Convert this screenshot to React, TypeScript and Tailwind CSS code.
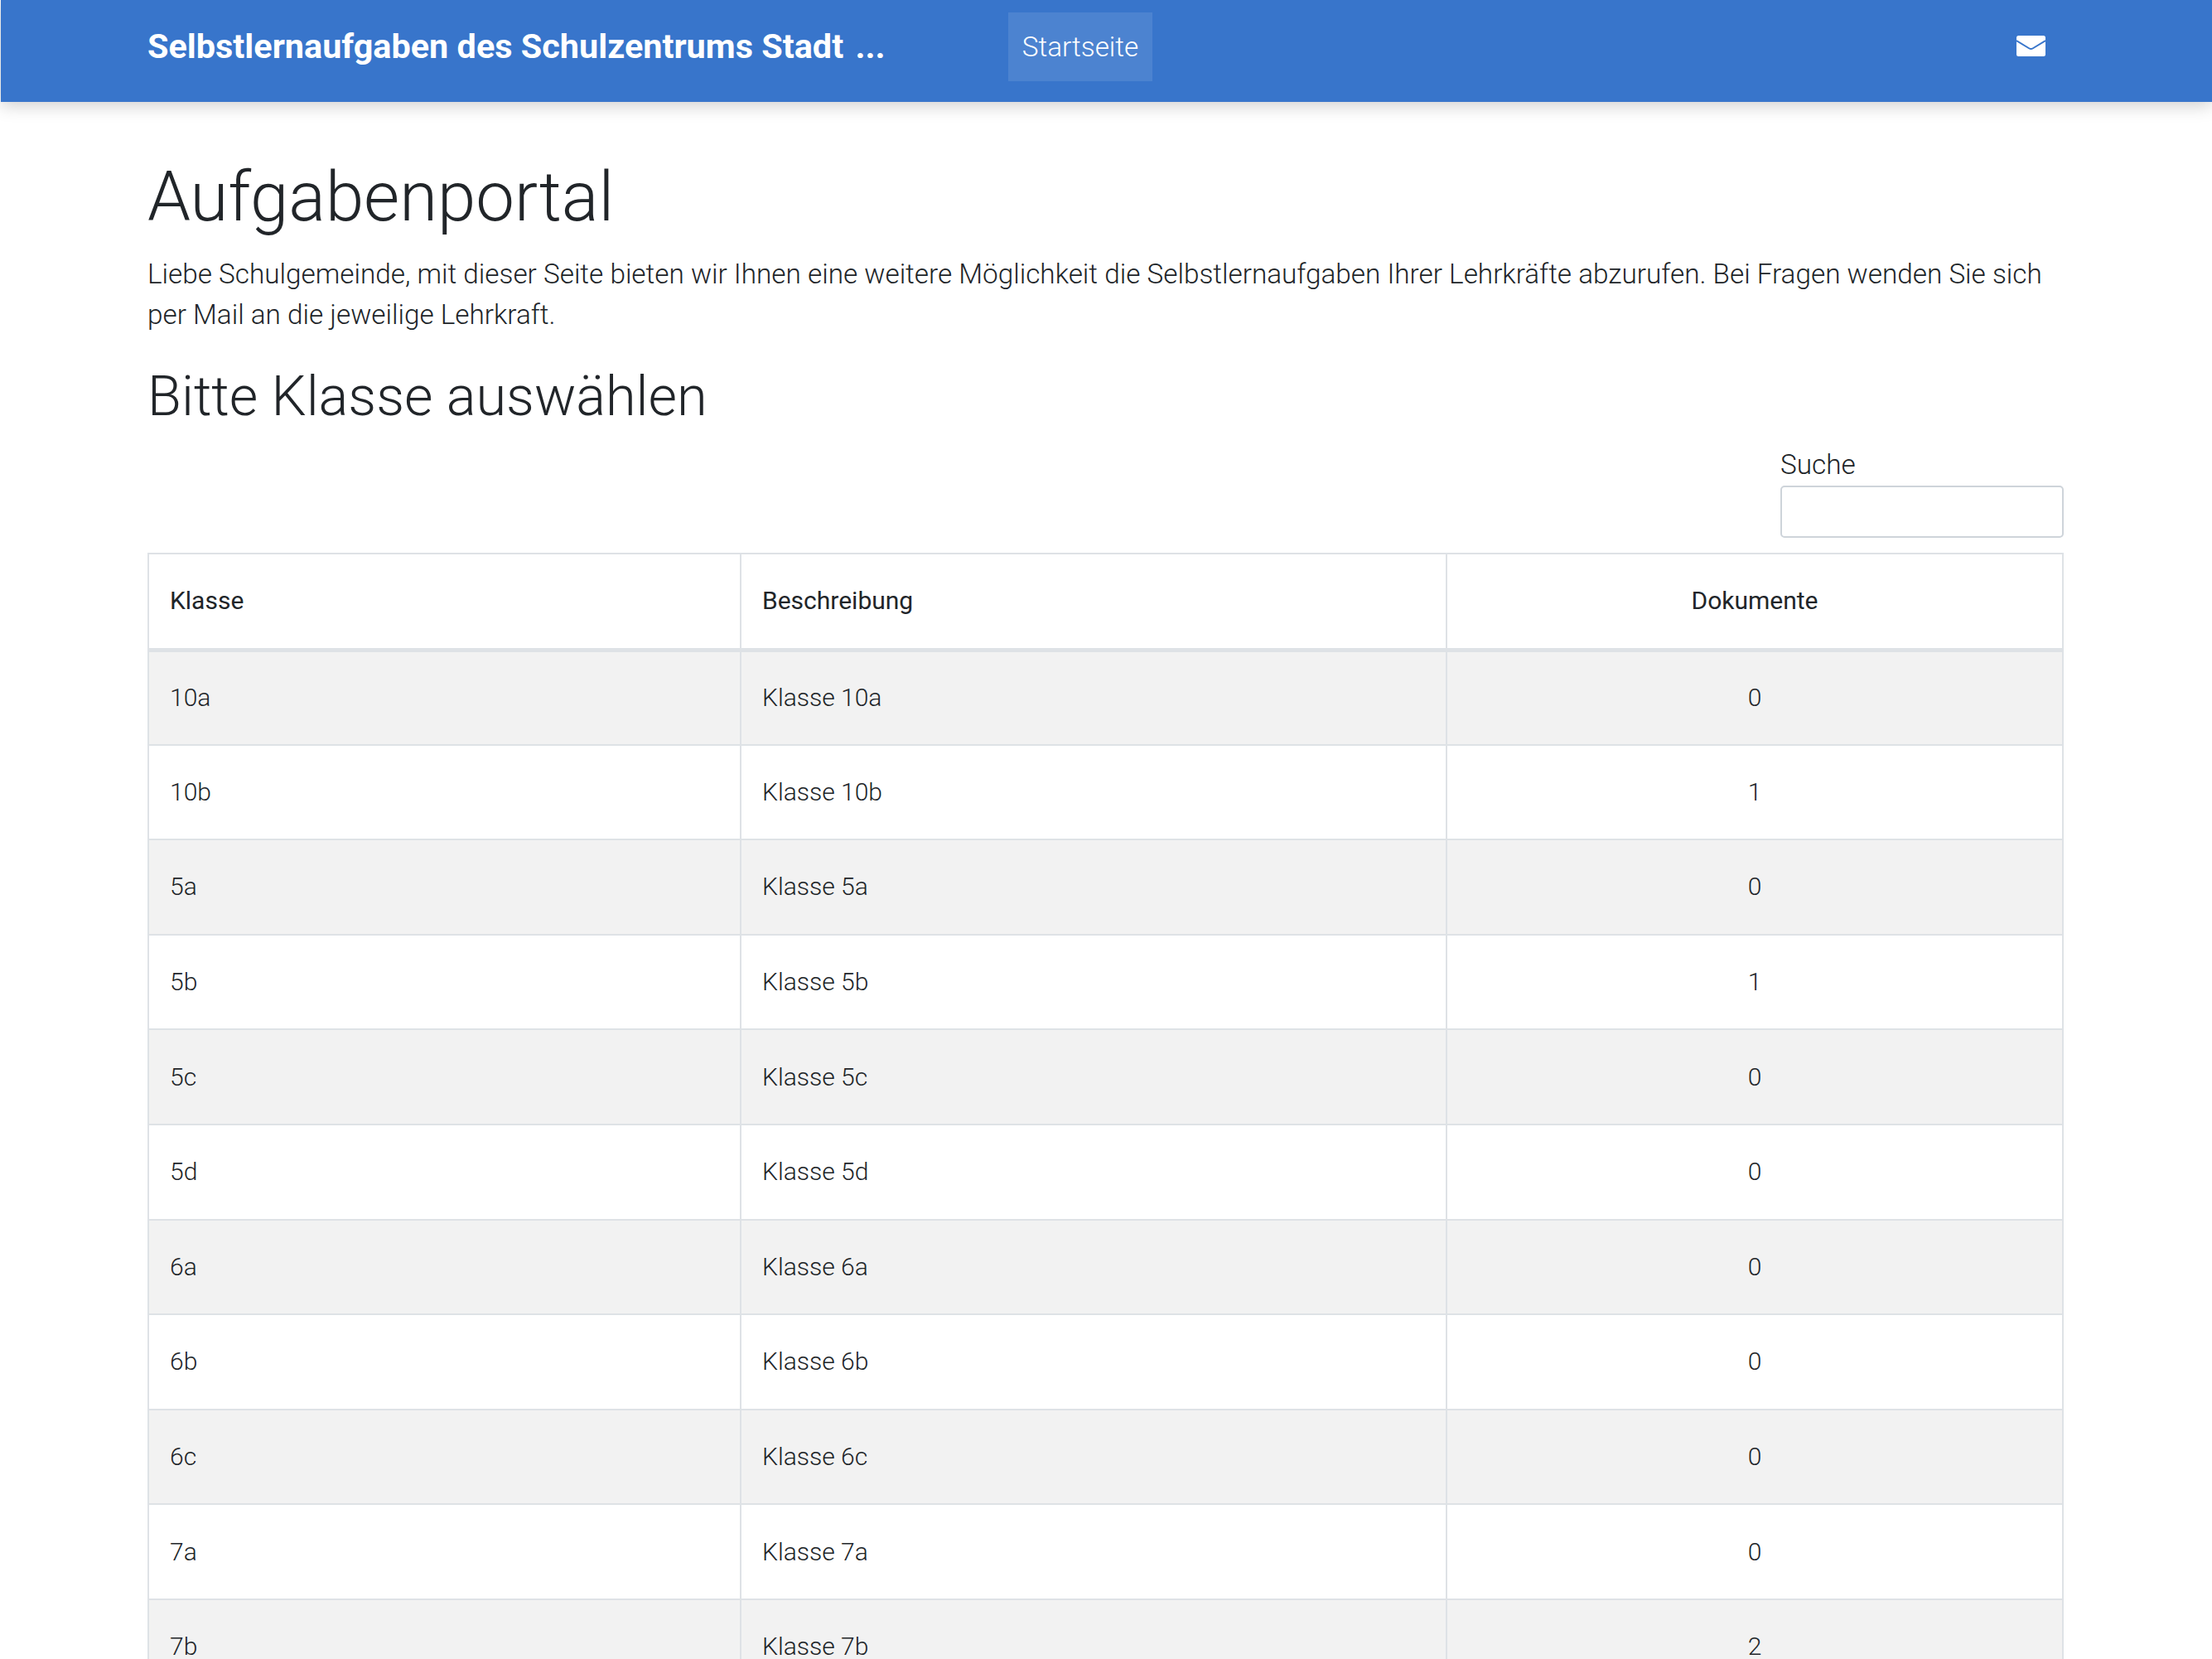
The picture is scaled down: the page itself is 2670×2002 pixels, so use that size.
const rows: [string, string][] = [
  ["10a", "0"],
  ["10b", "1"],
  ["5a", "0"],
  ["5b", "1"],
  ["5c", "0"],
  ["5d", "0"],
  ["6a", "0"],
  ["6b", "0"],
  ["6c", "0"],
  ["7a", "0"],
  ["7b", "2"],
];

export default function App() {
  return (
    <div className="h-[2002px] overflow-hidden bg-white font-['Roboto',sans-serif] font-light text-[#212529]">
      <nav className="relative z-10 ml-px flex h-[123px] items-center bg-[#3875cb] pb-[10px] pl-[177px] pr-[201px] shadow-[0_4px_20px_rgba(0,0,0,0.2)]">
        <a className="w-[1039px] whitespace-nowrap text-[41.4px] font-bold text-white">
          Selbstlernaufgaben des Schulzentrums Stadt <span className="ml-[4px]">...</span>
        </a>
        <a className="flex h-[83px] w-[174px] items-center justify-center bg-white/10 text-[33.3px] font-light text-white">
          Startseite
        </a>
        <svg className="ml-auto mb-[3px] h-[25px] w-[35px]" viewBox="0 0 35 25">
          <rect width="35" height="25" rx="2.5" fill="#fff" />
          <path d="M0 6 L15.5 15.5 Q17.5 16.7 19.5 15.5 L35 6" fill="none" stroke="#3875cb" strokeWidth="2" />
        </svg>
      </nav>
      <main className="ml-[178px] mr-[179px] pt-[65px]">
        <h1 className="text-[83.3px] leading-[100px]">Aufgabenportal</h1>
        <p className="mt-[17.6px] text-[33.3px] leading-[49.4px]">
          Liebe Schulgemeinde, mit dieser Seite bieten wir Ihnen eine weitere Möglichkeit die Selbstlernaufgaben Ihrer Lehrkräfte abzurufen. Bei Fragen wenden Sie sich per Mail an die jeweilige Lehrkraft.
        </p>
        <h2 className="mt-[35.6px] text-[66.7px] leading-[77px]">Bitte Klasse auswählen</h2>
        <div className="mt-[18px] flex justify-end">
          <label className="w-[342px] text-[33.3px] leading-[51px]">
            Suche
            <input className="block h-[63px] w-full rounded-[5px] border-2 border-[#ced4da] bg-white" />
          </label>
        </div>
        <table className="mt-[18px] w-full table-fixed border-collapse border-2 border-[#dee2e6] text-[30px] leading-[44px]">
          <colgroup>
            <col className="w-[715px]" />
            <col className="w-[852px]" />
            <col />
          </colgroup>
          <thead>
            <tr className="h-[116px] border-b-[5px] border-[#dee2e6]">
              <th className="border-r-2 border-[#dee2e6] px-[25px] text-left font-[450]">Klasse</th>
              <th className="border-r-2 border-[#dee2e6] px-[25px] text-left font-[450]">Beschreibung</th>
              <th className="px-[25px] text-center font-[450]">Dokumente</th>
            </tr>
          </thead>
          <tbody>
            {rows.map(([k, d], i) => (
              <tr key={k} className={`h-[114.6px] border-b-2 border-[#dee2e6] ${i % 2 === 0 ? "bg-[#f2f2f2]" : "bg-white"}`}>
                <td className="border-r-2 border-[#dee2e6] px-[25px]">{k}</td>
                <td className="border-r-2 border-[#dee2e6] px-[25px]">Klasse {k}</td>
                <td className="px-[25px] text-center">{d}</td>
              </tr>
            ))}
          </tbody>
        </table>
      </main>
    </div>
  );
}
